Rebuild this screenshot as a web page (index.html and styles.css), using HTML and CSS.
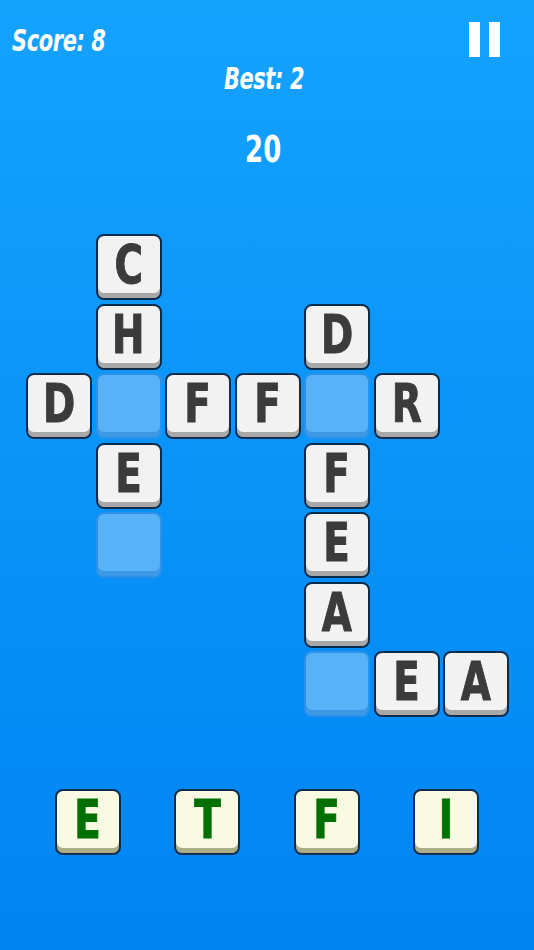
FILE: index.html
```html
<!DOCTYPE html>
<html>
<head>
<meta charset="utf-8">
<link rel="stylesheet" href="styles.css">
</head>
<body>
<div class="screen">
  <div class="topbar">
    <div class="score">Score: 8</div>
    <div class="pause"><span class="bar"></span><span class="bar"></span></div>
  </div>
  <div class="best">Best: 2</div>
  <div class="timer">20</div>

  <div class="board">
    <div class="tile c2 r1"><span>C</span></div>
    <div class="tile c2 r2"><span>H</span></div>
    <div class="tile c5 r2"><span>D</span></div>
    <div class="tile c1 r3"><span>D</span></div>
    <div class="slot c2 r3"></div>
    <div class="tile c3 r3"><span>F</span></div>
    <div class="tile c4 r3"><span>F</span></div>
    <div class="slot c5 r3"></div>
    <div class="tile c6 r3"><span>R</span></div>
    <div class="tile c2 r4"><span>E</span></div>
    <div class="tile c5 r4"><span>F</span></div>
    <div class="slot c2 r5"></div>
    <div class="tile c5 r5"><span>E</span></div>
    <div class="tile c5 r6"><span>A</span></div>
    <div class="slot c5 r7"></div>
    <div class="tile c6 r7"><span>E</span></div>
    <div class="tile c7 r7"><span>A</span></div>
  </div>

  <div class="rack">
    <div class="tile hand"><span>E</span></div>
    <div class="tile hand"><span>T</span></div>
    <div class="tile hand"><span>F</span></div>
    <div class="tile hand"><span>I</span></div>
  </div>
</div>
</body>
</html>
```
FILE: styles.css
```css
html, body {
  margin: 0;
  padding: 0;
}
body {
  width: 534px;
  height: 950px;
  overflow: hidden;
  background: linear-gradient(180deg, #14a2ff 0%, #0084f2 100%);
  font-family: "DejaVu Sans Condensed", "DejaVu Sans", sans-serif;
  color: #ffffff;
}
.screen {
  display: flex;
  flex-direction: column;
  height: 950px;
}
.topbar {
  display: flex;
  justify-content: space-between;
  align-items: flex-start;
  padding: 22px 34px 0 12px;
  height: 36px;
}
.score {
  font-weight: bold;
  font-style: oblique;
  font-size: 31px;
  line-height: 30px;
  margin-top: 3px;
  letter-spacing: -0.5px;
  transform-origin: left top;
  transform: scaleX(0.75);
}
.pause {
  display: flex;
  gap: 9px;
}
.pause .bar {
  width: 11px;
  height: 35px;
  background: #ffffff;
}
.best {
  text-align: center;
  font-weight: bold;
  font-style: oblique;
  font-size: 31px;
  line-height: 30px;
  margin-top: 5px;
  padding-right: 8px;
  letter-spacing: -0.5px;
  transform: scaleX(0.75);
}
.timer {
  text-align: center;
  font-weight: bold;
  font-size: 38px;
  line-height: 40px;
  margin-top: 36px;
  padding-right: 10px;
  transform: scaleX(0.76);
}
.board {
  display: grid;
  grid-template-columns: repeat(7, 66px);
  grid-template-rows: repeat(7, 66px);
  gap: 3.5px;
  margin: 65px 0 0 26px;
}
.c1 { grid-column: 1; }
.c2 { grid-column: 2; }
.c3 { grid-column: 3; }
.c4 { grid-column: 4; }
.c5 { grid-column: 5; }
.c6 { grid-column: 6; }
.c7 { grid-column: 7; }
.r1 { grid-row: 1; }
.r2 { grid-row: 2; }
.r3 { grid-row: 3; }
.r4 { grid-row: 4; }
.r5 { grid-row: 5; }
.r6 { grid-row: 6; }
.r7 { grid-row: 7; }
.tile {
  box-sizing: border-box;
  width: 66px;
  height: 66px;
  border: 2.5px solid #082c4c;
  border-radius: 8px;
  background: #f2f2f2;
  box-shadow: inset 0 -5px 0 #a8a8a8;
  display: flex;
  align-items: center;
  justify-content: center;
  color: #3b3b3b;
  font-weight: bold;
  font-size: 54px;
  line-height: 1;
}
.tile span {
  display: block;
  transform: scaleX(0.8);
  margin-top: -4px;
  -webkit-text-stroke: 1px currentColor;
}
.slot {
  box-sizing: border-box;
  width: 66px;
  height: 66px;
  border: 2px solid #2a92e8;
  border-radius: 8px;
  background: #58b2f7;
  box-shadow: inset 0 -5px 0 #3d99e6;
}
.rack {
  display: flex;
  justify-content: center;
  gap: 53.5px;
  margin-top: 72px;
  padding-left: 0;
}
.tile.hand {
  background: #f8fbe1;
  box-shadow: inset 0 -5px 0 #aaad86;
  color: #007000;
}
```
